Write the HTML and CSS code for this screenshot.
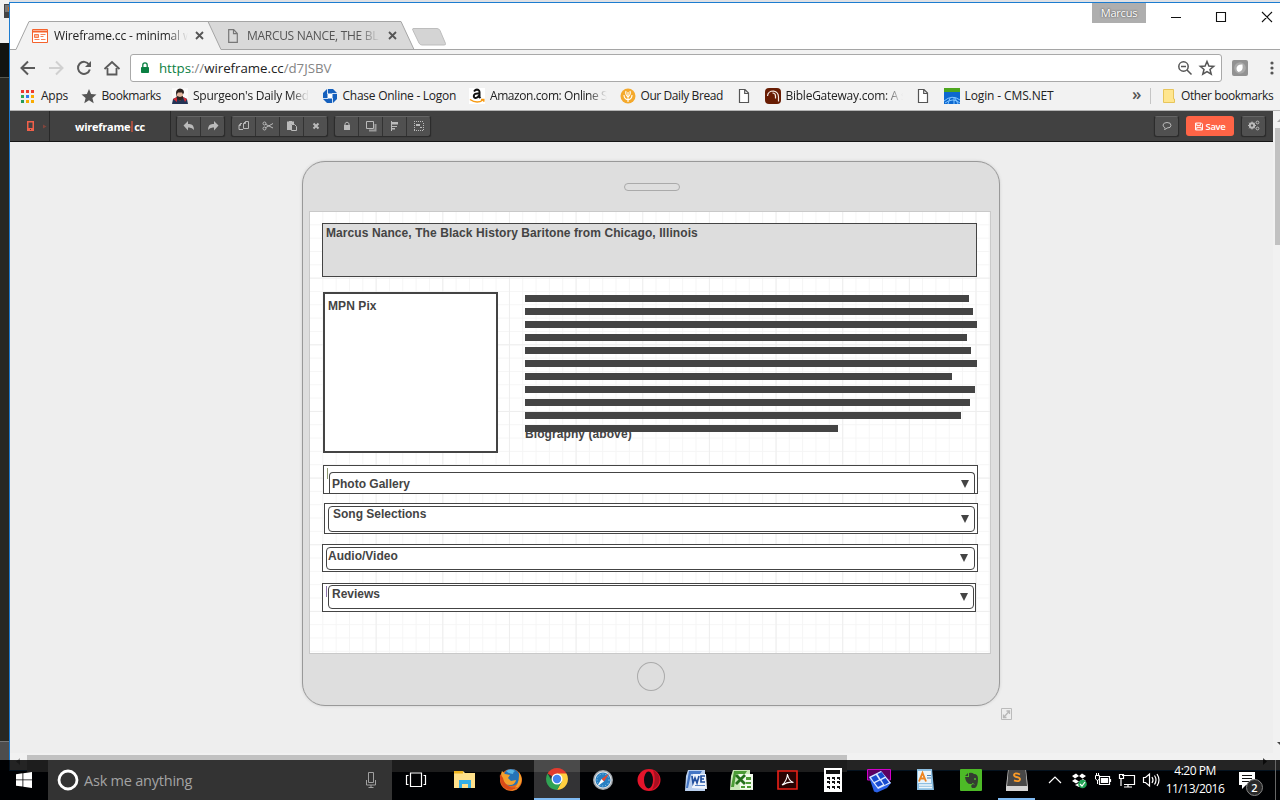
FILE: index.html
```html
<!DOCTYPE html>
<html lang="en">
<head>
<meta charset="utf-8">
<title>Wireframe.cc - minimal wireframing</title>
<link rel="stylesheet" href="styles.css">
</head>
<body>
<div class="desktop">
  <div class="behind">
    <svg class="behind-icon" width="8" height="16" viewBox="0 0 8 16"><path d="M2 1h6v14H2z" fill="#444"/><path d="M3 2h5v7H3z" fill="#777"/><path d="M6 4h2v4H6z" fill="#c96a1b"/></svg>
    <div class="behind-menu"></div><div class="behind-tab"></div><div class="behind-body"></div><div class="behind-foot"></div>
  </div>

  <div class="window">
    <header class="tabstrip">
      <svg class="tab-shapes" width="450" height="47" viewBox="10 3 450 47">
        <path d="M208 21.500H401L414 49.500H208z" fill="#d9d9d9" stroke="#a5a5a5"/>
        <path d="M413 28.500h24q2 0 3 2l5.500 13q.5 1.500-1.500 1.500h-22q-2 0-3-2l-6-12.500q-1-2 0-2z" fill="#d4d4d4" stroke="#bdbdbd"/>
        <path d="M10 49.500h6l13-28h179l13 28v1H10z" fill="#f2f2f2"/>
        <path d="M10 49.500h6l13-28h179l13 28H460" fill="none" stroke="#a5a5a5"/>
      </svg>
      <div class="tab tab-a">
        <svg width="16" height="14" viewBox="0 0 16 14"><path d="M.5.500h15v13H.5z" fill="#fff" stroke="#f4622c"/><path d="M1 2.500h14" stroke="#f4622c" stroke-width="2"/><path d="M2.500 5.500h4v3h-4zM8.500 5.500h5M8.500 7.500h3M2.500 10.500h5M9 10.500h4.500" fill="#f9b79c" stroke="#f4622c" stroke-width=".8"/></svg>
        <span class="tab-text">Wireframe.cc - minimal w</span>
        <svg class="x" width="9" height="9" viewBox="0 0 9 9"><path d="M1 1l7 7M8 1L1 8"/></svg>
      </div>
      <div class="tab tab-b">
        <svg width="10" height="14" viewBox="0 0 10 14"><path d="M.7.700h5l3.600 3.800v8.800H.7zM5.500.7v4h4" fill="none" stroke="#777" stroke-width="1.200"/></svg>
        <span class="tab-text">MARCUS NANCE, THE BL</span>
        <svg class="x" width="9" height="9" viewBox="0 0 9 9"><path d="M1 1l7 7M8 1L1 8"/></svg>
      </div>
      <div class="win-buttons">
        <span class="user">Marcus</span>
        <svg width="110" height="28" viewBox="1170 3 110 28"><path d="M1171 17.500h10M1216.500 12.500h9v9h-9zM1262 12l10 10M1272 12l-10 10" fill="none" stroke="#111" stroke-width="1.100"/></svg>
      </div>
    </header>

    <div class="address-row">
      <svg class="nav" width="110" height="28" viewBox="15 54 110 28" fill="none" stroke="#5a5a5a" stroke-width="2">
        <path d="M35 68H22M28 61.500L21.500 68l6.500 6.500"/><path d="M49 68h13M56 61.500l6.500 6.500-6.500 6.500" stroke="#d0d0d0"/>
        <path d="M89 64.500a6 6 0 1 0 .8 5"/><path d="M91 61v6h-6z" fill="#5a5a5a" stroke="none"/>
        <path d="M104.500 69l7.500-7 7.500 7M107.500 68v6.500h9V68" stroke-width="1.800"/>
      </svg>
      <div class="omnibox">
        <svg width="8" height="12" viewBox="1 0 8 12"><path d="M1.500 5.500h7v5h-7z" fill="#0b8043" stroke="#0b8043"/><path d="M2.800 5V3a2.200 2.200 0 0 1 4.400 0v2" fill="none" stroke="#0b8043" stroke-width="1.300"/></svg>
        <span class="url"><span class="green">https</span><span class="gray">://</span>wireframe.cc<span class="gray">/d7JSBV</span></span>
        <svg class="omni-icons" width="38" height="18" viewBox="1177 59 38 18" fill="none" stroke="#555" stroke-width="1.500"><circle cx="1183.500" cy="66.500" r="4.700"/><path d="M1187 70l4.500 4.500M1181 66.500h5"/><path d="M1207 61.500l1.900 4.500 4.800.4-3.700 3.100 1.200 4.700-4.200-2.600-4.200 2.600 1.200-4.700-3.700-3.100 4.800-.4z"/></svg>
      </div>
      <svg class="ext" width="16" height="16" viewBox="0 0 16 16"><rect width="16" height="16" rx="2" fill="#929292"/><circle cx="8" cy="8" r="5.800" fill="#aaa"/><path d="M4.500 9q0-5 6-4.500 1 7-4 7.500-2-1-2-3z" fill="#fff"/></svg>
      <svg class="dots" width="4" height="14" viewBox="0 0 4 14" fill="#555"><circle cx="2" cy="2" r="1.600"/><circle cx="2" cy="7" r="1.600"/><circle cx="2" cy="12" r="1.600"/></svg>
    </div>

    <nav class="bookmarks">
      <a class="bm" style="width:48px"><svg width="16" height="16" viewBox="0 0 16 16"><path d="M1 2h3v3H1zM6 2h3v3H6zM11 2h3v3h-3z" fill="#f03a2e"/><path d="M1 7h3v3H1z" fill="#34a853"/><path d="M6 7h3v3H6z" fill="#2c7df0"/><path d="M11 7h3v3h-3zM6 12h3v3H6zM11 12h3v3h-3z" fill="#f9ab00"/><path d="M1 12h3v3H1z" fill="#249c58"/></svg><span>Apps</span></a>
      <a class="bm" style="width:79px"><svg width="16" height="16" viewBox="0 0 16 16"><path d="M8 1l2.100 4.900 5.400.5-4.100 3.500 1.300 5.300L8 12.300l-4.700 2.900 1.300-5.300L.5 6.400l5.400-.5z" fill="#555"/></svg><span class="tight">Bookmarks</span></a>
      <a class="bm" style="width:137px"><svg width="16" height="16" viewBox="0 0 16 16"><path d="M0 0h16v16H0z" fill="#fafafa"/><path d="M0 16l1-5 4-2h6l4 2 1 5z" fill="#233456"/><path d="M1 11l4-2v5zM11 9l4 2-2 3z" fill="#d62b35"/><path d="M5 3h6v7l-3 3-3-3z" fill="#e2b79f"/><path d="M4 5q0-4 4-4.500 4 .5 4 4l-1 2-1-2H6L5 6v2l3 1 3-1v3l-3 2-3-2z" fill="#2c211f"/></svg><span class="fade">Spurgeon's Daily Med</span></a>
      <a class="bm" style="width:135px"><svg width="16" height="16" viewBox="0 0 16 16"><path d="M5 1h6l4 4v6l-4 4H5l-4-4V5z" fill="#1560bd"/><path d="M5.500 5.500h5v5h-5z" fill="#fff"/><path d="M5.500 1v5M15 5.500h-5M10.500 15v-5M1 10.500h5" stroke="#fff" stroke-width=".8"/></svg><span>Chase Online - Logon</span></a>
      <a class="bm" style="width:138px"><svg width="16" height="16" viewBox="0 0 16 16"><path d="M0 0h16v16H0z" fill="#fff"/><path d="M5 3.500Q7 .8 9.500 2q1 .6 1 2v5l1 1M10 5.500Q5 5 4.800 8c0 3 3.500 2.700 5.200-.5" fill="none" stroke="#111" stroke-width="2"/><path d="M1 11.500q7 4.800 13 .5M12 11.500h2.800v2.300" fill="none" stroke="#f79b14" stroke-width="1.500"/></svg><span class="fade tight">Amazon.com: Online S</span></a>
      <a class="bm" style="width:104px"><svg width="16" height="16" viewBox="0 0 16 16"><circle cx="8" cy="8" r="7.500" fill="#f4a92c"/><path d="M8 14V4M8 12Q4 11 4 7M8 9Q5 7 6 3M8 12q4-1 4-5M8 9q3-2 2-6" fill="none" stroke="#fff" stroke-width="1.100"/></svg><span class="tight">Our Daily Bread</span></a>
      <a class="bm" style="width:16px"><svg width="16" height="16" viewBox="0 0 16 16"><path d="M3.500 1.500h5.500l3.500 3.600v9.400h-9zM8.700 1.500v4h4" fill="#fff" stroke="#555" stroke-width="1.200"/></svg></a>
      <a class="bm" style="width:138px"><svg width="16" height="16" viewBox="0 0 16 16"><rect width="16" height="16" rx="4" fill="#681c03"/><path d="M2.500 8q.5-5 6-5 5 1 5 6v4.500M7.500 5q3 0 3 3v2.500" fill="none" stroke="#f4e9e4" stroke-width="1.200"/></svg><span class="fade">BibleGateway.com: A s</span></a>
      <a class="bm" style="width:16px"><svg width="16" height="16" viewBox="0 0 16 16"><path d="M3.500 1.500h5.500l3.500 3.600v9.400h-9zM8.700 1.500v4h4" fill="#fff" stroke="#555" stroke-width="1.200"/></svg></a>
      <a class="bm" style="width:110px"><svg width="16" height="16" viewBox="0 0 16 16"><path d="M0 0h16v16H0z" fill="#0d68d0"/><path d="M0 0h16v4H0z" fill="#4da61d"/><path d="M0 13q8-7 16-1M1 15q8-6 15 0M4 16l2-6M10 16V9M14 16l-3-6" fill="none" stroke="#7fc4ff"/></svg><span class="loose">Login - CMS.NET</span></a>
      <span class="more">»</span><span class="bm-line"></span>
      <a class="bm other"><svg width="14" height="16" viewBox="0 0 14 16"><path d="M1.500 1.500h10V11h1v3.500h-11z" fill="#ffe68f" stroke="#e7c55b"/></svg><span class="tight">Other bookmarks</span></a>
    </nav>

    <div class="page">
      <main class="editor">
        <div class="toolbar">
          <div class="device-pick"><svg width="24" height="12" viewBox="0 0 24 12"><path d="M1 1h7v10H1z" fill="#f0604a"/><path d="M2.500 2.500h4v5.500h-4z" fill="#414141"/><path d="M4 9h1v1H4z" fill="#414141"/><path d="M17 4.500l3.500 2-3.500 2z" fill="#81463d"/></svg></div>
          <div class="brand">wireframe<i></i>cc</div>
          <div class="group">
            <b><svg viewBox="0 0 16 16"><path d="M7 3v3q6-1 6 6-2-3-6-2.500v3L2.500 7.500z"/></svg></b>
            <b><svg viewBox="0 0 16 16"><path d="M9 3v3Q3 5 3 12q2-3 6-2.500v3l4.500-5z"/></svg></b>
          </div>
          <div class="group">
            <b><svg viewBox="0 0 16 16"><path d="M7.500 5.500l2-2h3v7h-5zM6 5.500H4.500l-1.500 2v4h4" class="line"/><path d="M9.500 3.500v2h-2M4.500 5.500v2H3" class="line"/></svg></b>
            <b><svg viewBox="0 0 16 16"><path d="M5 6l8 4M5 10l8-4.500" class="line"/><circle cx="4.500" cy="5.500" r="1.500" class="line"/><circle cx="4.500" cy="10.500" r="1.500" class="line"/></svg></b>
            <b><svg viewBox="0 0 16 16"><path d="M3 3.500h2V3h3v.5h2V6H7v6H3z"/><path d="M7.500 6.500h3l2 2v4h-5z" class="line"/></svg></b>
            <b><svg viewBox="0 0 16 16"><path d="M5.500 5.500l5 5M10.500 5.500l-5 5" class="thick"/></svg></b>
          </div>
          <div class="group">
            <b><svg viewBox="0 0 16 16"><path d="M5 7h6v5H5z"/><path d="M6 7V5.500q2-3 4 0V7" class="line"/></svg></b>
            <b><svg viewBox="0 0 16 16"><path d="M3.500 3.500h7v7h-7z" class="line"/><path d="M6 12.500h6.500V6" class="thick shade"/></svg></b>
            <b><svg viewBox="0 0 16 16"><path d="M4 3h1v10H4zM5 4h6v2.500H5zM5 8h5v1H5zM5 10h3v1.500H5z"/></svg></b>
            <b><svg viewBox="0 0 16 16"><path d="M3 3.500h10M3 12.500h10M3.500 5v8M12.500 5v8" class="line" stroke-dasharray="1 1"/><path d="M5 6h4v2H5zM9 9h2v1H9z"/></svg></b>
          </div>
          <div class="tools-right">
            <div class="group"><b><svg viewBox="0 0 16 16"><path d="M5.500 11.500q.8-1 .5-1.800-2-.8-2-2.700.5-2.500 4-2.500 4 0 4 2.800t-4 2.700q-1 1.200-2.500 1.500z" class="line"/></svg></b></div>
            <div class="save"><svg width="8" height="9" viewBox="0 0 9 9"><path d="M.6.600h6.600l1.200 1.200v6.600H.6zM2 1v2.500h4V1M2 8V5.500h5V8" fill="none" stroke="#fff" stroke-width="1.100"/></svg>Save</div>
            <div class="group"><b><svg viewBox="0 0 16 16"><circle cx="6" cy="7.500" r="2.200" class="thick"/><path d="M6 3.500v2M6 9.500v2M2 7.500h2M8 7.500h2M3.200 4.700l1.500 1.500M7.300 8.800l1.500 1.500M8.800 4.700L7.300 6.200M4.700 8.800l-1.500 1.500" class="line"/><circle cx="11.500" cy="4.500" r="1.400" class="line"/><circle cx="11.500" cy="10.500" r="1.400" class="line"/></svg></b></div>
          </div>
        </div>
        <div class="canvas-area">
          <section class="device">
            <div class="speaker"></div>
            <div class="screen">
              <div class="w title">Marcus Nance, The Black History Baritone from Chicago, Illinois</div>
              <div class="w pix">MPN Pix</div>
              <div class="w bio-label">Biography (above)</div>
              <div class="w bio">
                <p style="width:444px"></p><p style="width:448px"></p><p style="width:452px"></p><p style="width:442px"></p><p style="width:446px"></p><p style="width:452px"></p><p style="width:427px"></p><p style="width:450px"></p><p style="width:445px"></p><p style="width:436px"></p><p style="width:313px"></p>
              </div>
              <div class="w row r1"><em></em><div class="combo"><span>Photo Gallery</span><u></u></div></div>
              <div class="w row r2"><div class="combo"><span>Song Selections</span><u></u></div></div>
              <div class="w row r3"><div class="combo"><span>Audio/Video</span><u></u></div></div>
              <div class="w row r4"><em></em><div class="combo"><span>Reviews</span><u></u></div></div>
            </div>
            <div class="home"></div>
            <svg class="resize" width="11" height="12" viewBox="0 0 11 12"><path d="M.5.500h10v11H.5z" fill="#eee" stroke="#bbb"/><path d="M3 9l5-5.500M5.500 3H8.500v3M2.500 6.500v3h3" fill="none" stroke="#b8b8b8" stroke-width="1.300"/></svg>
          </section>
        </div>
        <div class="hscroll"><svg width="17" height="17" viewBox="0 0 17 17"><path d="M10 5v7L6 8.500z" fill="#a0a0a0"/></svg><i></i><svg width="17" height="17" viewBox="0 0 17 17"><path d="M7 5v7l4-3.500z" fill="#444"/></svg></div>
      </main>
      <div class="vscroll"><svg width="7" height="17" viewBox="0 0 7 17"><path d="M4 11l4-4v4z" fill="#aaa"/></svg><i></i><svg class="down" width="7" height="17" viewBox="0 0 7 17"><path d="M4 6l4 4V6z" fill="#444"/></svg></div>
    </div>
  </div>

  <footer class="taskbar">
    <div class="start"><svg width="16" height="16" viewBox="0 0 16 16" fill="#fff"><path d="M0 2.200l6.500-.9v6.200H0zM7.300 1.200L16 0v7.500H7.300zM0 8.300h6.500v6.300L0 13.700zM7.300 8.300H16V16l-8.700-1.200z"/></svg></div>
    <div class="search"><svg width="22" height="22" viewBox="0 0 22 22"><circle cx="11" cy="11" r="9" fill="none" stroke="#fff" stroke-width="2.800"/></svg><span>Ask me anything</span>
      <svg width="12" height="17" viewBox="0 0 12 17" fill="none" stroke="#a0a0a0"><path d="M3.500.500h5v10h-5zM1.500 8v5h9V8M6 13v3M3.500 15.500h5"/></svg></div>
    <div class="taskview"><svg width="20" height="16" viewBox="0 0 20 16" fill="none" stroke="#fff" stroke-width="1.200"><path d="M4.500 1h11v13.500h-11zM2.500 3.500h-2v9h2M17.500 3.500h2v9h-2"/></svg></div>
    <div class="task"><svg width="22" height="22" viewBox="0 0 22 22"><path d="M0 2h9l2 2h10v15H0z" fill="#ffe08a"/><path d="M0 2h9v2.500H0z" fill="#efb51f"/><path d="M5 19v-8h12v8h-3v-4H8v4z" fill="#35aee5"/></svg></div>
    <div class="task"><svg width="24" height="24" viewBox="0 0 24 24"><circle cx="12" cy="12" r="11" fill="#e5691e"/><circle cx="12.500" cy="9.500" r="8.500" fill="#2573b7"/><path d="M7 3q5-3 9 0-2 1-2 3-4 0-7-3z" fill="#59b5e3"/><path d="M2 6l1-3 3 3 5 1-2 3 3 3 5-1q-1 5-6 5-6 0-7-5zM20 4q5 8 0 14-3 4-8 5 9-5 8-19z" fill="#f4a22d"/><path d="M1 6q-1 10 5 14 7 4 13-1-5 1-8 0-6-3-7-9z" fill="#d94a18"/></svg></div>
    <div class="task active"><svg width="24" height="24" viewBox="0 0 24 24"><path d="M12 12L2.500 6.500A11 11 0 0 1 21.500 6.500z" fill="#e33b2e"/><path d="M12 12L12 6.500h9.500A11 11 0 0 1 12 23l5-9z" fill="#ffcf3f"/><path d="M12 12l4.500 3L12 23A11 11 0 0 1 2.500 6.500L7.500 15z" fill="#30a354"/><circle cx="12" cy="12" r="5.500" fill="#fff"/><circle cx="12" cy="12" r="4.200" fill="#4483ee"/></svg></div>
    <div class="task"><svg width="22" height="22" viewBox="0 0 22 22"><circle cx="11" cy="11" r="10" fill="#a3aab0"/><circle cx="11" cy="11" r="8.500" fill="#e2e6e9"/><circle cx="11" cy="11" r="7.500" fill="#277fc2"/><circle cx="11" cy="11" r="6" fill="none" stroke="#a4d0ee" stroke-dasharray="1 2"/><path d="M17 4.500l-5 8-2.500-2.500z" fill="#e9462f"/><path d="M5 17.500l4.500-7.500 2.500 2.500z" fill="#fff"/></svg></div>
    <div class="task"><svg width="24" height="24" viewBox="0 0 24 24"><ellipse cx="12" cy="12" rx="11.500" ry="11" fill="#e4152b"/><ellipse cx="11.500" cy="12" rx="4.500" ry="8.500" fill="#080c11"/><path d="M16 2q7 4 6.500 10T15 22q5-10 1-20z" fill="#a80f20"/></svg></div>
    <div class="task"><svg width="23" height="23" viewBox="0 0 23 23"><path d="M4 1h17v21H1L2 7z" fill="#b9cfee"/><path d="M5 2h13l-2 3H7L4 19H2z" fill="#4476c4"/><path d="M9 5h13l1 15-15-1z" fill="#eef4fc"/><path d="M8 7l1 7 2-5 2 5 2-7M21 7h-4v6h4M17 10h3" fill="none" stroke="#214f9e" stroke-width="1.700"/><path d="M11 16.500h10" stroke="#5681c4"/></svg></div>
    <div class="task"><svg width="23" height="23" viewBox="0 0 23 23"><path d="M3 1h17v20H0L1 7z" fill="#cae7b9"/><path d="M4 2h13l-2 3H6L4 18H1z" fill="#4b9c35"/><path d="M9 5h14v16l-13-1z" fill="#f2fbed"/><path d="M6 6l9 9M15 6l-9 9" stroke="#24701b" stroke-width="2.800"/><path d="M16 8h5v3h-5zM16 13h5v2h-5zM11 17h4v2h-4zM17 17h4v2h-4z" fill="#4b9c35"/></svg></div>
    <div class="task"><svg width="21" height="20" viewBox="0 0 21 20"><path d="M1 1h19v18H1z" fill="#280303" stroke="#ea2118" stroke-width="1.600"/><path d="M5 15Q10 11 10.500 4q1 7 6 8.500-5-1.500-11 2.500" fill="none" stroke="#fff" stroke-width="1.100"/></svg></div>
    <div class="task"><svg width="18" height="24" viewBox="0 0 18 24"><path d="M0 0h18v24H0z" fill="#fff"/><path d="M2 2h14v4H2zM3 9h3v3H5v-1H3zM8 9h3v3h-1v-1H8zM13 9h3v3h-1v-1h-2zM3 13h3v3H5v-1H3zM8 13h3v3h-1v-1H8zM13 13h3v3h-1v-1h-2zM3 18h3v3H5v-1H3zM8 18h3v3h-1v-1H8zM13 18h3v3h-1v-1h-2z" fill="#111"/></svg></div>
    <div class="task"><svg width="24" height="25" viewBox="0 0 24 25"><path d="M.5 1.500h23V12H.5z" fill="#5b0060" stroke="#d100cb"/><path d="M2 9L14 3l10 12-4 5-10 4.500-3-1z" fill="#2b62e8"/><path d="M2 9L14 3l10 12-13 6z" fill="#dce8ff"/><path d="M4 9.500l5-2.500 3 4.500-5 2.500zM10.500 6l4-2 3.500 4.500-4.500 2.500zM8 15l5-2.500 3 4-5 2.500zM14.500 12l4-2 3.500 4.500-4.500 2.500z" fill="#174bd0"/></svg></div>
    <div class="task"><svg width="19" height="22" viewBox="0 0 19 22"><path d="M1 0h15l2 21H1z" fill="#8dbfe2"/><path d="M2 2h13v12H2z" fill="#eaf4fb"/><path d="M3 12.500L6.500 4 10 12.500M4.500 9.500h4.300" fill="none" stroke="#ed8421" stroke-width="1.900"/><path d="M11 6.500h4M11 9h4" stroke="#4b83b5"/><path d="M3 16h13M3 18.500h13" stroke="#eff7fb" stroke-width="1.300"/></svg></div>
    <div class="task"><svg width="22" height="22" viewBox="0 0 22 22"><rect width="22" height="22" rx="1" fill="#4dba27"/><path d="M5 7l3-3v3zM5 8h4V4q3-1 5 1 4 0 4 5 0 7-3 9h-3q-2-3 1-4l2 1q-1-2-3-2v1q-6 1-7-7z" fill="#343d31"/><circle cx="15" cy="10" r="1" fill="#4dba27"/></svg></div>
    <div class="task sublime"><svg width="22" height="21" viewBox="0 0 22 21"><path d="M2 0h18l2 17v4H0v-4z" fill="#d5d5d5"/><path d="M2.500 0h17l1.500 16H1z" fill="#474747"/><path d="M14 4.500Q8.500 2 8 5q0 1.600 3.500 2.200 3.500 1 2 3.200-2 1.500-5.500 0" fill="none" stroke="#f99a27" stroke-width="1.900"/></svg></div>
    <div class="tray">
      <svg width="118" height="22" viewBox="1045 769 118 22" fill="none" stroke="#fff" stroke-width="1.200">
        <path d="M1049 783l6-6 6 6"/>
        <path d="M1072 776l4-2.500 3 2.500-4 2.500zM1079 776l3-2.500 4 2.500-3.500 2.500zM1072 781l3-2 4 2.500-3 2zM1079 781.500l4-2.500 3 2-3 2zM1075 785l4-2 4 2-4 2z" fill="#fff" stroke="none"/><circle cx="1082.500" cy="784" r="4.300" fill="#21a455" stroke="none"/><path d="M1080 784l2 2 3-4"/>
        <path d="M1099.500 776.500h10v8h-10zM1110.500 779v3" /><path d="M1101.500 778.500h6v4h-6z" fill="#fff"/><path d="M1095.500 775.500h4v3.500q-2 3-4 0zM1096.500 773v2M1098.500 773v2M1097.500 780v4" stroke-width="1"/>
        <path d="M1122 775.500h12.500v9H1124M1128 784v3M1124 787h8"/><path d="M1119.500 774.500h4v4h-4zM1121 778v8"/>
        <path d="M1143.500 777.500h2l4-3.500v12l-4-3.500h-2zM1152 777q2 3 0 6M1154.500 775.500q3 4.500 0 9M1157 774q4 6 0 12"/>
      </svg>
      <div class="clock"><span>4:20 PM</span><span>11/13/2016</span></div>
      <svg class="notes" width="25" height="26" viewBox="0 0 25 26"><path d="M0 1h16v13H7l-4 4v-4H0z" fill="#fff"/><path d="M3 4.500h10M3 7.500h10M3 10.500h7" stroke="#111"/><circle cx="15.500" cy="16.500" r="8" fill="#292929" stroke="#858585"/><text x="12.300" y="20.500" fill="#fff" font-family="Open Sans, sans-serif" font-size="11" font-weight="600">2</text></svg>
      <span class="peek"></span>
    </div>
  </footer>
</div>
</body>
</html>
```
FILE: styles.css
```css
* { box-sizing: border-box; }
body { margin: 0; width: 1280px; height: 800px; overflow: hidden; font-family: "Open Sans", "Noto Sans", sans-serif; font-size: 12px; color: #222; }
svg { display: block; flex: none; overflow: visible; }
.desktop { position: relative; width: 1280px; height: 800px; overflow: hidden; background: #000914; }
.behind { position: absolute; left: 0; top: 0; width: 1280px; height: 760px; background: #dfe1e5; }
.behind-icon { position: absolute; left: 2px; top: 3px; }
.behind-menu { width: 9px; height: 43px; background: #f0f1f1; }
.behind-tab { width: 9px; height: 35px; background: #121410; border-bottom: 1px solid #56584e; }
.behind-body { width: 9px; height: 663px; background: #272822; }
.behind-foot { width: 9px; height: 19px; background: #4d4d4d; border-top: 1px solid #777; }

.window { position: absolute; left: 9px; top: 2px; width: 1280px; height: 769px; border: 1px solid #1c7cd0; background: #fff; display: flex; flex-direction: column; }
.tabstrip { position: relative; height: 47px; width: 1270px; flex: none; display: flex; border-bottom: 1px solid #a5a5a5; }
.tab-shapes { position: absolute; left: 0; top: 0; }
.tab { position: relative; display: flex; align-items: center; height: 27px; margin-top: 19px; }
.tab-a { margin-left: 22px; width: 184px; }
.tab-b { margin-left: 12px; width: 184px; color: #555; }
.tab-text { margin-left: 6px; width: 134px; white-space: nowrap; letter-spacing: -.15px; -webkit-mask-image: linear-gradient(to right, #000 84%, transparent 100%); }
.tab-b .tab-text { margin-left: 9px; width: 133px; letter-spacing: -.3px; }
.x { margin-left: 7px; stroke: #555; stroke-width: 1.800; fill: none; }
.tab-b .x { margin-left: 8px; }
.win-buttons { display: flex; margin-left: auto; }
.user { width: 54px; height: 20px; margin-right: 24px; background: #aeaeae; color: #fff; font-size: 11px; line-height: 20px; text-align: center; text-shadow: 0 0 2px #333; letter-spacing: -.2px; }

.address-row { height: 35px; width: 1270px; flex: none; background: #f2f2f2; display: flex; align-items: center; }
.nav { margin-left: 5px; }
.omnibox { display: flex; align-items: center; width: 1092px; height: 28px; margin-left: 5px; padding-left: 10px; background: #fff; border: 1px solid #a9a9a9; border-radius: 3px; }
.url { margin-left: 10px; font-size: 13.300px; letter-spacing: -.03px; white-space: nowrap; }
.green { color: #0b8043; }
.gray { color: #858585; }
.omni-icons { margin-left: auto; margin-right: 6px; }
.ext { margin-left: 10px; }
.dots { margin-left: 22px; }

.bookmarks { height: 26px; width: 1270px; flex: none; background: #f2f2f2; border-bottom: 1px solid #b4b4b4; display: flex; align-items: center; gap: 12.500px; padding: 0 0 4px 10px; }
.bm { display: flex; align-items: center; flex: none; gap: 5px; white-space: nowrap; letter-spacing: -.25px; }
.bm span { flex: 1; min-width: 0; }
.bm .tight { letter-spacing: -.42px; }
.bm .loose { letter-spacing: -.12px; }
.fade { -webkit-mask-image: linear-gradient(to right, #000 84%, transparent 100%); }
.more { margin-left: 66px; width: 10px; font-size: 17px; font-weight: 600; line-height: 16px; color: #555; margin-top: -3px; }
.bm-line { width: 1px; height: 16px; background: #c5c5c5; margin-left: -5px; }
.other { margin-left: -1px; }

.page { flex: 1; width: 1270px; display: flex; min-height: 0; }
.editor { flex: 1; display: flex; flex-direction: column; min-width: 0; }
.toolbar { height: 31px; flex: none; display: flex; align-items: center; gap: 6px; background: #414141; border-bottom: 1px solid #151515; }
.device-pick { width: 40px; height: 30px; display: flex; align-items: center; padding-left: 16px; border-right: 1px solid #282828; }
.brand { width: 121px; height: 30px; margin: 0 -1px 0 -6px; display: flex; align-items: center; justify-content: center; color: #fff; font-weight: 700; font-size: 11px; letter-spacing: -.25px; border-right: 1px solid #292929; }
.brand i { width: 2px; height: 11px; background: #a84e3f; margin: 1px 1px 0; }
.group { height: 21px; display: flex; background: #505050; border: 1px solid #2c2c2c; border-top-color: #656565; border-radius: 3px; box-shadow: 0 0 1px #222; }
.group b { width: 24px; height: 19px; display: flex; align-items: center; justify-content: center; border-left: 1px solid #333; }
.group b:first-child { border-left: 0; width: 23px; }
.group svg { width: 16px; height: 16px; fill: #bbb; }
.group .line { fill: none; stroke: #bbb; stroke-width: 1; }
.group .thick { fill: none; stroke: #bbb; stroke-width: 2; }
.group .shade { stroke: #999; }
.tools-right { display: flex; align-items: center; gap: 7px; margin: 0 7px 0 auto; }
.save { width: 48px; height: 20px; border-radius: 3px; background: #ff6446; color: #fff; font-size: 9.500px; font-weight: 600; display: flex; align-items: center; justify-content: center; gap: 3px; letter-spacing: -.35px; }

.canvas-area { flex: 1; min-height: 0; background: #eee; padding: 19px 0 0 292px; }
.device { position: relative; width: 698px; height: 545px; background: #dedede; border: 1px solid #999; border-radius: 23px; box-shadow: 0 0 3px #ccc; display: flex; flex-direction: column; align-items: center; }
.speaker { width: 56px; height: 8px; margin: 21px 0 20px 2px; border: 1px solid #aaa; border-radius: 4px; }
.home { width: 28px; height: 29px; margin-top: 8px; border: 1px solid #aaa; border-radius: 50%; }
.resize { position: absolute; left: 698px; top: 546px; }
.screen { position: relative; width: 682px; height: 443px; flex: none; margin-right: 2px; border: 1px solid #c9c9c9; background-color: #fff; background-image: linear-gradient(90deg, #eee 1px, transparent 1px), linear-gradient(#eee 1px, transparent 1px), linear-gradient(90deg, #f5f5f5 1px, transparent 1px), linear-gradient(#f5f5f5 1px, transparent 1px); background-size: 66.667px 66.667px, 66.667px 66.667px, 13.333px 13.333px, 13.333px 13.333px; background-position: -1px -1px; }
.w { position: absolute; font: bold 12px "Liberation Sans", Arial, sans-serif; color: #444; white-space: nowrap; letter-spacing: .08px; }
.title { left: 12px; top: 11px; width: 655px; height: 54px; border: 1px solid #444; background: #ddd; padding: 2px 3px; }
.pix { left: 13px; top: 80px; width: 175px; height: 161px; border: 2px solid #444; background: #fff; padding: 5px 3px; }
.bio-label { left: 215px; top: 215px; }
.bio { left: 215px; top: 83px; display: flex; flex-direction: column; gap: 6px; }
.bio p { margin: 0; height: 7px; background: #444; }
.row { border: 1px solid #444; background: #fff; display: flex; letter-spacing: 0; }
.row em { position: absolute; left: 3px; top: 2px; width: 1px; height: 11px; background: #8a72a8; }
.combo { flex: 1; border: 1px solid #444; border-radius: 4px; display: flex; justify-content: space-between; padding: 0 5px 0 3px; }
.combo u { width: 8px; height: 8px; background: #444; clip-path: polygon(0 0, 100% 0, 50% 100%); flex: none; }
.r1 { left: 13px; top: 253px; width: 655px; height: 29px; padding: 6px 2px 0 5px; }
.r1 em { background: #8f9a72; }
.r1 .combo { border-bottom: 0; border-radius: 4px 4px 0 0; padding-left: 2px; }
.r1 span { margin-top: 4px; }
.r1 u { margin-top: 7px; }
.r2 { left: 14px; top: 291px; width: 654px; height: 31px; padding: 2px 2px 1px 3px; }
.r2 .combo { padding-left: 4px; }
.r2 u { margin-top: 8px; }
.r3 { left: 12px; top: 332px; width: 656px; height: 28px; padding: 2px 2px 1px 3px; }
.r3 .combo { padding-left: 1px; padding-right: 6px; }
.r3 span { margin-top: 1px; }
.r3 u { margin-top: 6px; }
.r4 { left: 12px; top: 371px; width: 654px; height: 29px; padding: 1px 1px 2px 5px; }
.r4 span { margin-top: 1px; }
.r4 u { margin-top: 7px; }

.hscroll { height: 17px; flex: none; display: flex; background: #f1f1f1; }
.hscroll i { width: 820px; height: 17px; margin: 2px auto 0 0; background: #c1c1c1; }
.vscroll { width: 7px; display: flex; flex-direction: column; background: #f1f1f1; }
.vscroll i { margin-left: 2px; height: 117px; background: #c1c1c1; }
.vscroll .down { margin-top: auto; margin-bottom: 17px; }

.taskbar { position: absolute; left: 0; bottom: 0; width: 1280px; height: 40px; background: rgba(0, 0, 0, .85); display: flex; }
.start { width: 48px; display: flex; align-items: center; justify-content: center; }
.search { width: 344px; background: #333; color: #a3a3a3; font-size: 14.500px; display: flex; align-items: center; padding: 0 15px 0 9px; }
.search span { margin: 0 auto 0 5px; letter-spacing: -.22px; }
.taskview { width: 50px; padding-right: 2px; display: flex; align-items: center; justify-content: center; }
.task { width: 46px; display: flex; align-items: center; justify-content: center; }
.active { background: rgba(255, 255, 255, .2); border-bottom: 2px solid #80bbf3; }
.sublime { box-shadow: inset 0 -2px #80bbf3; width: 37px; margin: 0 5px 0 4px; }
.tray { flex: 1; display: flex; align-items: center; color: #fff; padding-left: 5px; }
.clock { width: 62px; margin-left: 1px; display: flex; flex-direction: column; align-items: center; line-height: 18px; letter-spacing: -.5px; }
.notes { margin-left: 13px; margin-top: 7px; }
.peek { margin-left: 11px; width: 1px; height: 40px; background: #666; }
```
